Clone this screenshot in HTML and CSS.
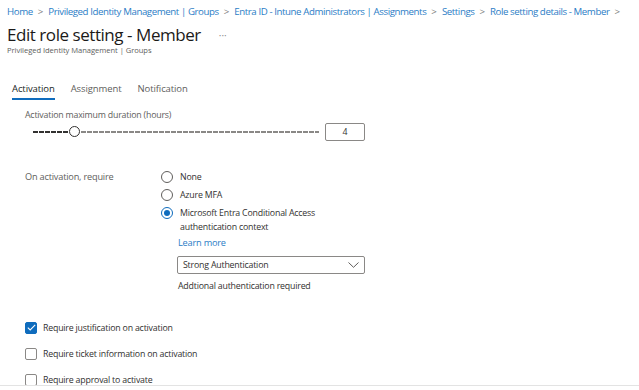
FILE: index.html
```html
<!DOCTYPE html>
<html>
<head>
<meta charset="utf-8">
<link rel="stylesheet" href="styles.css">
</head>
<body>
<div class="page">
  <nav class="crumbs">
    <a>Home</a><span class="sep">&gt;</span><a>Privileged Identity Management | Groups</a><span class="sep">&gt;</span><a>Entra ID - Intune Administrators | Assignments</a><span class="sep">&gt;</span><a>Settings</a><span class="sep">&gt;</span><a>Role setting details - Member</a><span class="sep">&gt;</span>
  </nav>
  <div class="title-row">
    <h1 class="title">Edit role setting - Member</h1>
    <span class="more">···</span>
  </div>
  <div class="subtitle">Privileged Identity Management | Groups</div>

  <div class="tabs">
    <div class="tab active">Activation</div>
    <div class="tab">Assignment</div>
    <div class="tab">Notification</div>
  </div>

  <div class="duration">
    <div class="label">Activation maximum duration (hours)</div>
    <div class="slider-row">
      <div class="slider">
        <div class="track-fill"></div>
        <div class="thumb"></div>
        <div class="track-rest"></div>
      </div>
      <div class="num">4</div>
    </div>
  </div>

  <div class="require">
    <div class="req-label">On activation, require</div>
    <div class="options">
      <div class="radio-row"><span class="radio"></span><span>None</span></div>
      <div class="radio-row"><span class="radio"></span><span>Azure MFA</span></div>
      <div class="radio-row"><span class="radio checked"></span><span>Microsoft Entra Conditional Access<br>authentication context</span></div>
      <a class="learn">Learn more</a>
      <div class="select">
        <span>Strong Authentication</span>
        <svg width="11" height="6" viewBox="0 0 11 6"><path d="M0.5 0.5 L5.5 5.3 L10.5 0.5" fill="none" stroke="#605e5c" stroke-width="1"/></svg>
      </div>
      <div class="note">Addtional authentication required</div>
    </div>
  </div>

  <div class="checks">
    <div class="check-row"><span class="box checked"><svg width="9" height="7" viewBox="0 0 9 7"><path d="M0.8 3.6 L3.2 5.9 L8.2 0.9" fill="none" stroke="#fff" stroke-width="1.1"/></svg></span><span>Require justification on activation</span></div>
    <div class="check-row"><span class="box"></span><span>Require ticket information on activation</span></div>
    <div class="check-row"><span class="box"></span><span>Require approval to activate</span></div>
  </div>
</div>
</body>
</html>
```

FILE: styles.css
```css
html, body {
  margin: 0;
  padding: 0;
  background: #fff;
}
body {
  font-family: "Open Sans", "Noto Sans", sans-serif;
  color: #323130;
  width: 639px;
  height: 390px;
  overflow: hidden;
}
.page {
  height: 385px;
  border-bottom: 1px solid #e3e3e3;
  overflow: hidden;
}
.crumbs {
  display: flex;
  align-items: center;
  padding: 5px 0 0 7px;
  font-size: 9.7px;
  line-height: 14px;
  letter-spacing: -0.42px;
  color: #2b7dc6;
  white-space: nowrap;
  height: 14px;
}
.crumbs .sep {
  color: #7a7a7a;
  margin: 0 5px;
  letter-spacing: 0;
}
.title-row {
  display: flex;
  align-items: center;
  padding-left: 7px;
  margin-top: 5px;
  height: 22px;
}
.title {
  margin: 0;
  font-size: 17px;
  line-height: 22px;
  font-weight: 400;
  color: #1b1a19;
  letter-spacing: -0.45px;
}
.more {
  margin-left: 18px;
  font-size: 10px;
  color: #8f8f8f;
  letter-spacing: 0;
}
.subtitle {
  padding-left: 7px;
  font-size: 7.6px;
  line-height: 8px;
  color: #605e5c;
  letter-spacing: -0.05px;
}
.tabs {
  display: flex;
  gap: 16px;
  padding-left: 12px;
  margin-top: 28px;
}
.tab {
  font-size: 9.5px;
  line-height: 14px;
  color: #605e5c;
  padding-bottom: 2px;
  border-bottom: 2px solid transparent;
  letter-spacing: -0.1px;
}
.tab.active {
  color: #201f1e;
  border-bottom-color: #0f6cbd;
}
.duration {
  padding-left: 25px;
  margin-top: 9px;
}
.label {
  font-size: 8.8px;
  line-height: 12px;
  letter-spacing: -0.2px;
  color: #605e5c;
}
.slider-row {
  display: flex;
  align-items: center;
  margin-top: 1px;
  height: 19px;
}
.slider {
  display: flex;
  align-items: center;
  width: 286px;
  margin-left: 8px;
}
.track-fill {
  flex: none;
  width: 36px;
  height: 2px;
  background: repeating-linear-gradient(90deg, #323130 0 5px, transparent 5px 6px);
}
.thumb {
  width: 11px;
  height: 11px;
  border: 1px solid #323130;
  border-radius: 50%;
  background: #fff;
  box-sizing: border-box;
  margin: 0 1px 0 0;
  flex: none;
}
.track-rest {
  flex: 1;
  height: 2px;
  background: repeating-linear-gradient(90deg, #8a8886 0 5px, transparent 5px 6px);
}
.num {
  margin-left: 6px;
  width: 40px;
  height: 18px;
  box-sizing: border-box;
  border: 1px solid #8a8886;
  border-radius: 2px;
  font-size: 8.8px;
  display: flex;
  align-items: center;
  justify-content: center;
  color: #323130;
}
.require {
  display: flex;
  padding-left: 25px;
  margin-top: 29px;
}
.req-label {
  width: 136px;
  font-size: 9.2px;
  line-height: 14px;
  letter-spacing: -0.2px;
  color: #605e5c;
}
.options {
  display: flex;
  flex-direction: column;
  font-size: 8.8px;
  line-height: 14px;
  letter-spacing: -0.2px;
  color: #323130;
}
.radio-row {
  display: flex;
  align-items: flex-start;
  gap: 7px;
  margin-bottom: 4px;
}
.radio {
  width: 12px;
  height: 12px;
  margin-top: 1px;
  border: 1px solid #605e5c;
  border-radius: 50%;
  box-sizing: border-box;
  flex: none;
  position: relative;
}
.radio.checked {
  border-color: #0f6cbd;
}
.radio.checked::after {
  content: "";
  position: absolute;
  left: 2px;
  top: 2px;
  width: 6px;
  height: 6px;
  border-radius: 50%;
  background: #0f6cbd;
}
.learn {
  margin-left: 17px;
  color: #2b7dc6;
  margin-top: -2px;
  font-size: 9.2px;
}
.select {
  margin-left: 16px;
  margin-top: 6px;
  width: 188px;
  height: 18px;
  box-sizing: border-box;
  border: 1px solid #8a8886;
  border-radius: 2px;
  display: flex;
  align-items: center;
  justify-content: space-between;
  padding: 0 5px;
  color: #323130;
}
.note {
  margin-left: 17px;
  margin-top: 5px;
  color: #323130;
}
.checks {
  padding-left: 25px;
  margin-top: 28px;
  font-size: 8.8px;
  letter-spacing: -0.2px;
  color: #323130;
}
.check-row {
  display: flex;
  align-items: center;
  gap: 6px;
  height: 13px;
  margin-bottom: 13px;
}
.box {
  width: 12px;
  height: 12px;
  box-sizing: border-box;
  border: 1px solid #8a8886;
  border-radius: 2px;
  display: flex;
  align-items: center;
  justify-content: center;
  flex: none;
}
.box.checked {
  background: #0f6cbd;
  border-color: #0f6cbd;
}
```
